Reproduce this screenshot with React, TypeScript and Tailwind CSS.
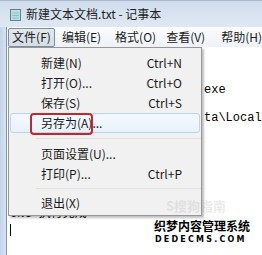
import React from "react";

const cjk = { fontFamily: '"Noto Sans CJK SC", "Noto Sans", sans-serif' };
const mono = { fontFamily: '"Liberation Mono", "Noto Sans CJK SC", monospace' };

const lines = ["", "", "exe", "", "ta\\Local\\Temp", "", "", "", "", "", ""];

function MenuItem({ label, shortcut, active }: { label: string; shortcut?: string; active?: boolean }) {
  return (
    <div
      className={
        "mx-[1px] flex h-[20px] items-center justify-between rounded-[3px] border pl-[30px] pr-[17px] " +
        (active ? "border-[#b8d6f0] bg-gradient-to-b from-[#f4f9fe] to-[#e8f1fb]" : "border-transparent")
      }
    >
      <span className="text-[12px] leading-none text-[#1a1a1a]">{label}</span>
      {shortcut && <span className="text-[12px] leading-none text-[#1a1a1a]">{shortcut}</span>}
    </div>
  );
}

function Sep({ h }: { h: string }) {
  return (
    <div className={"flex items-center pl-[27px] " + h}>
      <div className="h-[2px] w-full border-t border-[#e0e0e0] border-b-white" />
    </div>
  );
}

export default function App() {
  return (
    <div className="relative h-[255px] w-[262px] overflow-hidden bg-white" style={cjk}>
      {/* Title bar */}
      <div className="flex h-[27px] items-center border-t border-[#a9b8c9] bg-gradient-to-b from-[#cfdcec] via-[#d8e3f0] to-[#dfe8f2] pl-[10px]">
        <svg width="11" height="12" viewBox="0 0 11 12" className="mr-[5px] mt-[1px]">
          <rect x="0.5" y="0.5" width="10" height="11" fill="#b9e0e4" stroke="#5f8390" />
          <line x1="2" y1="4" x2="9" y2="4" stroke="#8fbcc4" />
          <line x1="2" y1="6.5" x2="9" y2="6.5" stroke="#8fbcc4" />
          <line x1="2" y1="9" x2="9" y2="9" stroke="#8fbcc4" />
        </svg>
        <span className="whitespace-nowrap text-[12px] leading-none text-[#1e1e1e]">新建文本文档.txt - 记事本</span>
      </div>

      <div className="flex h-[228px]">
        {/* left frame */}
        <div className="flex w-[7px] shrink-0">
          <div className="w-[6px] bg-gradient-to-r from-[#c3d4ea] to-[#d6e2f0]" />
          <div className="w-[1px] bg-[#8596ab]" />
        </div>

        <div className="flex min-w-0 flex-1 flex-col">
          {/* menu bar */}
          <div className="flex h-[20px] items-center bg-gradient-to-b from-[#fbfcfd] to-[#eef2f7] pl-[1px]">
            <div className="flex h-[19px] w-[47px] items-center justify-center rounded-[2px] border border-[#7d8d9e] bg-gradient-to-b from-[#e2e8ef] to-[#d5dde6]">
              <span className="text-[12px] leading-none text-[#1a1a1a]">文件(F)</span>
            </div>
            <span className="ml-[7px] whitespace-nowrap text-[12px] leading-none text-[#1a1a1a]">编辑(E)</span>
            <span className="ml-[14px] whitespace-nowrap text-[12px] leading-none text-[#1a1a1a]">格式(O)</span>
            <span className="ml-[10px] whitespace-nowrap text-[12px] leading-none text-[#1a1a1a]">查看(V)</span>
            <span className="ml-[16px] whitespace-nowrap text-[12px] leading-none text-[#1a1a1a]">帮助(H)</span>
          </div>

          {/* text area */}
          <div className="flex-1 overflow-hidden bg-white pl-[3px] pt-[8px]" style={mono}>
            {lines.map((l, i) => (
              <div key={i} className="h-[14px] whitespace-pre pl-[194px] text-[12px] leading-[14px] text-black">
                {l}
              </div>
            ))}
            <div className="-mt-[2px] h-[14px] whitespace-pre text-[12px] leading-[14px] text-black">ONG 执行完成</div>
            <div className="mt-[3px] h-[12px] w-[1px] bg-black" />
          </div>
        </div>
      </div>

      {/* dropdown menu */}
      <div className="absolute left-[8px] top-[47px] w-[194px] border border-[#979797] bg-[#f1f1f1] pb-[2px] pt-[5px] shadow-[2px_2px_2px_rgba(0,0,0,0.25)]">
        <MenuItem label="新建(N)" shortcut="Ctrl+N" />
        <MenuItem label="打开(O)..." shortcut="Ctrl+O" />
        <MenuItem label="保存(S)" shortcut="Ctrl+S" />
        <MenuItem label="另存为(A)..." active />
        <Sep h="h-[11px]" />
        <MenuItem label="页面设置(U)..." />
        <MenuItem label="打印(P)..." shortcut="Ctrl+P" />
        <Sep h="h-[9px]" />
        <MenuItem label="退出(X)" />
      </div>

      {/* faint image watermark */}
      <div className="absolute left-[166px] top-[199px] text-[13px] font-bold leading-none text-[rgba(160,160,160,0.22)]">S搜狗指南</div>

      {/* red highlight box */}
      <div className="absolute left-[30px] top-[113px] h-[22px] w-[63px] rounded-[4px] border-2 border-[#c4262c]" />

      {/* watermark */}
      <div className="absolute left-[154px] top-[219px] flex flex-col items-start">
        <span
          className="whitespace-nowrap text-[12px] font-bold leading-[14px] text-black"
          style={{ textShadow: "1px 0 #fff, -1px 0 #fff, 0 1px #fff, 0 -1px #fff, 1px 1px #fff, -1px -1px #fff, 1px -1px #fff, -1px 1px #fff" }}
        >
          织梦内容管理系统
        </span>
        <span
          className="mt-[3px] whitespace-nowrap pl-[1px] text-[8px] font-bold leading-[8px] tracking-[2.2px] text-black"
          style={{ fontFamily: '"DejaVu Sans", sans-serif', textShadow: "1px 0 #fff, -1px 0 #fff, 0 1px #fff, 0 -1px #fff" }}
        >
          DEDECMS.COM
        </span>
      </div>
    </div>
  );
}
